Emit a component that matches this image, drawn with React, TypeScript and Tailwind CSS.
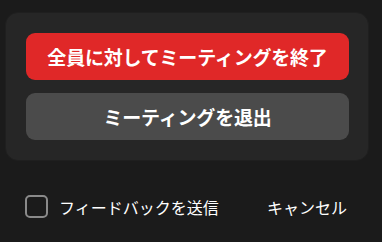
const jp = { fontFamily: '"Noto Sans CJK JP", "Noto Sans", sans-serif' };

export default function App() {
  return (
    <div className="w-[382px] h-[242px] bg-[#1b1b1b] text-white overflow-hidden" style={jp}>
      <div className="pt-[12px] pl-[5px]">
        <div className="w-[364px] rounded-[13px] border border-[#1f1f1f] bg-[#262626] px-[20px] py-[20px] flex flex-col gap-[13px]">
          <button className="w-[323px] h-[47px] rounded-[9px] bg-[#e02828] text-[19px] font-bold leading-none tracking-[-0.2px]">
            全員に対してミーティングを終了
          </button>
          <button className="w-[323px] h-[47px] rounded-[9px] bg-[#4b4b4b] text-[19px] font-bold leading-none tracking-[-0.2px]">
            ミーティングを退出
          </button>
        </div>
      </div>
      <div className="mt-[34px] pl-[25px] pr-[35px] flex items-center justify-between">
        <label className="flex items-center gap-[11px]">
          <span className="w-[23px] h-[23px] rounded-[5px] border-2 border-[#8a8a8a]" />
          <span className="text-[16px] leading-none">フィードバックを送信</span>
        </label>
        <span className="text-[16px] leading-none">キャンセル</span>
      </div>
    </div>
  );
}
